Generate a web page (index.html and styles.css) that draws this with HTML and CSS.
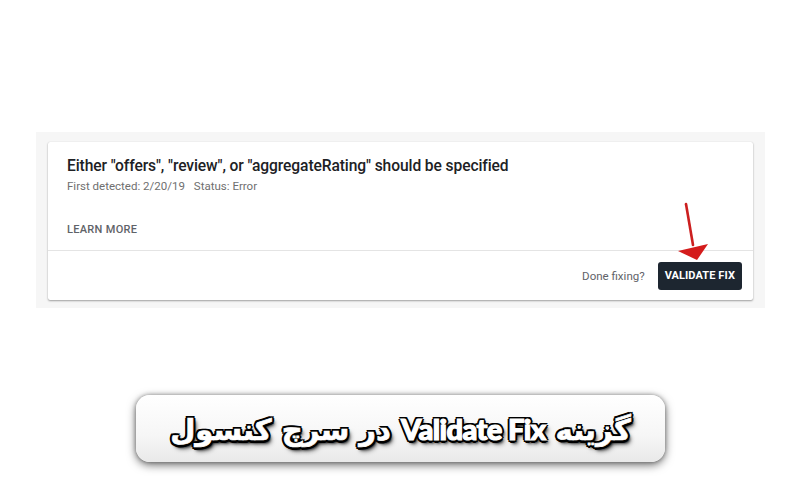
FILE: index.html
```html
<!DOCTYPE html>
<html lang="fa">
<head>
<meta charset="utf-8">
<link rel="stylesheet" href="styles.css">
</head>
<body>
<div class="page">
  <div class="panel">
    <div class="card">
      <div class="card-body">
        <div class="title">Either "offers", "review", or "aggregateRating" should be specified</div>
        <div class="meta"><span>First detected: 2/20/19</span><span>Status: Error</span></div>
        <div class="learn">LEARN MORE</div>
      </div>
      <div class="card-foot">
        <span class="done">Done fixing?</span>
        <span class="btn">VALIDATE FIX</span>
      </div>
      <svg class="arrow" width="40" height="60" viewBox="0 0 40 60">
        <line x1="9" y1="3" x2="16" y2="44" stroke="#cc1f1f" stroke-width="2.6" stroke-linecap="round"/>
        <polygon points="1,50 31,43 20,59" fill="#d41c1c"/>
      </svg>
    </div>
  </div>
  <div class="banner">
    <div class="banner-text" dir="rtl">گزینه <span class="latin" dir="ltr">Validate Fix</span> در سرچ کنسول</div>
  </div>
</div>
</body>
</html>
```
FILE: styles.css
```css
html, body {
  margin: 0;
  padding: 0;
  background: #ffffff;
}
.page {
  width: 800px;
  height: 480px;
  overflow: hidden;
  padding-top: 132px;
  box-sizing: border-box;
  font-family: Roboto, "Liberation Sans", sans-serif;
}
.panel {
  margin-left: 36px;
  width: 729px;
  height: 176px;
  box-sizing: border-box;
  padding: 10px 12px 8px 12px;
  background: #f6f6f6;
}
.card {
  position: relative;
  height: 158px;
  background: #ffffff;
  box-shadow: 0 1px 2px rgba(0,0,0,0.35), 0 0 1px rgba(0,0,0,0.15);
  border-radius: 2px;
  display: flex;
  flex-direction: column;
}
.card-body {
  height: 109px;
  box-sizing: border-box;
  padding: 14px 19px 0 19px;
  border-bottom: 1px solid #e4e4e4;
}
.title {
  font-size: 15.6px;
  font-weight: 500;
  color: #202124;
  line-height: 20px;
  letter-spacing: -0.1px;
}
.meta {
  margin-top: 3px;
  font-size: 11.5px;
  line-height: 14px;
  color: #6f6f6f;
  display: flex;
  gap: 9px;
}
.learn {
  margin-top: 30px;
  font-size: 11px;
  font-weight: 500;
  color: #5f6368;
  letter-spacing: 0.3px;
  line-height: 14px;
}
.card-foot {
  flex: 1;
  display: flex;
  align-items: center;
  justify-content: flex-end;
  gap: 13px;
  padding-right: 11px;
}
.done {
  font-size: 11.5px;
  color: #5f6368;
}
.btn {
  background: #1d2630;
  color: #ffffff;
  font-size: 11px;
  font-weight: 700;
  letter-spacing: 0.1px;
  height: 28px;
  line-height: 28px;
  padding: 0 7px;
  border-radius: 3px;
}
.arrow {
  position: absolute;
  left: 629px;
  top: 59px;
}
.banner {
  margin: 87px 0 0 136px;
  width: 529px;
  height: 67px;
  border-radius: 14px;
  background: linear-gradient(180deg, #ffffff 0%, #f6f6f6 60%, #e9e9e9 100%);
  box-shadow: 0 3px 10px rgba(0,0,0,0.55), 0 0 4px rgba(0,0,0,0.35);
  display: flex;
  align-items: center;
  justify-content: center;
}
.banner-text {
  font-family: "DejaVu Sans", sans-serif;
  font-weight: 700;
  font-size: 29px;
  color: #ffffff;
  white-space: nowrap;
  -webkit-text-stroke: 0.7px #ffffff;
  text-shadow:
    2.5px 0 0 #000, -2.5px 0 0 #000, 0 2.5px 0 #000, 0 -2.5px 0 #000,
    1.8px 1.8px 0 #000, -1.8px 1.8px 0 #000, 1.8px -1.8px 0 #000, -1.8px -1.8px 0 #000,
    2px 3px 3px #000, 3px 4px 5px rgba(0,0,0,0.6);
}
.latin {
  font-family: Lato, "DejaVu Sans", sans-serif;
  font-weight: 900;
  font-size: 29px;
  letter-spacing: -0.6px;
  -webkit-text-stroke: 1.2px #ffffff;
}
```
